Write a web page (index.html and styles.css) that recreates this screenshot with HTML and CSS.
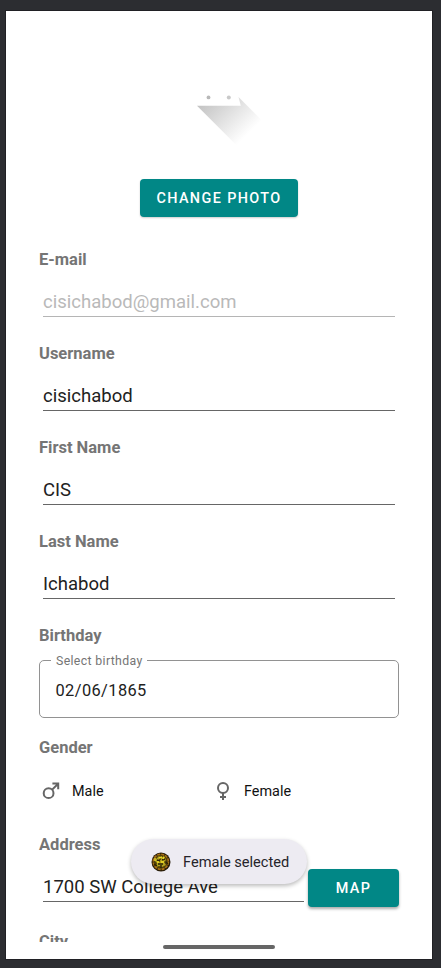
FILE: index.html
```html
<!DOCTYPE html>
<html lang="en">
<head>
<meta charset="utf-8">
<title>Profile</title>
<link rel="stylesheet" href="styles.css">
</head>
<body>
<div class="screen">
  <main class="content">
    <svg class="avatar" viewBox="0 0 80 60" width="80" height="60">
      <defs>
        <linearGradient id="shade" gradientUnits="userSpaceOnUse" x1="30" y1="8" x2="69" y2="48">
          <stop offset="0" stop-color="#c2c2c2"/>
          <stop offset="1" stop-color="#fff"/>
        </linearGradient>
      </defs>
      <path d="M17 20.7H60.8L58.5 12L84 37.5L58 61.7Z" fill="url(#shade)"/>
      <circle cx="28.5" cy="12.4" r="1.9" fill="#b8b8b8"/>
      <circle cx="48.8" cy="12.4" r="2" fill="#c9c9c9"/>
    </svg>
    <button class="btn photo">CHANGE PHOTO</button>
    <div class="field"><label>E-mail</label><div class="input disabled"><span>cisichabod@gmail.com</span></div></div>
    <div class="field"><label>Username</label><div class="input"><span>cisichabod</span></div></div>
    <div class="field"><label>First Name</label><div class="input"><span>CIS</span></div></div>
    <div class="field"><label>Last Name</label><div class="input"><span>Ichabod</span></div></div>
    <label>Birthday</label>
    <fieldset class="date"><legend><span>Select birthday</span></legend><div><span>02/06/1865</span></div></fieldset>
    <label>Gender</label>
    <div class="genders">
      <div class="gender">
        <svg viewBox="0 0 20 20" width="20" height="20"><g fill="none" stroke="#666" stroke-width="2"><circle cx="7.6" cy="12.2" r="4.9"/><path d="M11.2 8.6L16.6 3.2M11.4 2.4H17.2V8.2"/></g></svg>
        <span>Male</span>
      </div>
      <div class="gender">
        <svg viewBox="0 0 20 20" width="20" height="20"><g fill="none" stroke="#666" stroke-width="2"><circle cx="10" cy="7" r="5"/><path d="M10 12V19M7 15.9H13"/></g></svg>
        <span>Female</span>
      </div>
    </div>
    <label>Address</label>
    <div class="address"><div class="input"><span>1700 SW College Ave</span></div><button class="btn map">MAP</button></div>
    <label class="city">City</label>
  </main>
  <div class="toast">
    <svg viewBox="0 0 20 20" width="20" height="20">
      <circle cx="10" cy="10" r="9.5" fill="#251b08"/>
      <circle cx="9.8" cy="9.8" r="7.6" fill="#50400a" stroke="#a97016" stroke-width="1.6" stroke-dasharray="3 1"/>
      <path d="M5 7L8 4L10 6L13 4L15 8L13 10L15 13L11 15L8 14L5 15L6 11L4 9Z" fill="#b3a31d"/>
      <path d="M6 8L9 9M11 8L14 7M7 12H12M9 5V8M10 13V16M3 12L6 14M15 10L17 12" stroke="#2d2306" stroke-width="1.4"/>
      <path d="M8 6L11 5M10 10H13M6 10H8M4 6V9M12 7L13 5" stroke="#f0dc28" stroke-width="1.4"/>
    </svg>
    <span>Female selected</span>
  </div>
  <div class="home"></div>
</div>
</body>
</html>
```
FILE: styles.css
```css
* { box-sizing: border-box; }
html, body { margin: 0; height: 100%; }
body {
  padding: 11px 9px 9px 6px;
  background: #2c2d31;
  font-family: Roboto, sans-serif;
  overflow: hidden;
}
.screen {
  position: relative;
  height: 948px;
  background: #fff;
  box-shadow: 0 0 0 1px #202024;
}
.content {
  display: flex;
  flex-direction: column;
  height: 931px;
  padding: 74px 33px 0;
  overflow: hidden;
}
.content > * { flex-shrink: 0; }
.avatar { margin-left: 141px; overflow: visible; }
label {
  display: block;
  height: 20px;
  font-size: 16.5px;
  line-height: 22px;
  font-weight: 700;
  color: #757575;
}
.btn {
  height: 38px;
  padding: 0;
  border: 0;
  border-radius: 4px;
  background: #018786;
  color: #fff;
  font: 500 14.4px/38px Roboto, sans-serif;
  letter-spacing: 1.4px;
  text-indent: 0;
  padding-top: 1px;
  box-shadow: 0 1px 2px #0003;
}
.photo { width: 158px; margin: 34px 0 32px 101px; }
.field { height: 94px; }
.input {
  height: 48px;
  margin: 0 4px;
  padding-top: 21px;
  border-bottom: 1px solid #666;
  font-size: 18.55px;
  line-height: 25px;
  color: #212121;
}
.disabled { border-color: #b5b5b5; color: #b9b9b9; }
.date {
  height: 65px;
  margin: 8px 0 19px;
  padding: 0 16px;
  border: 1px solid #929292;
  border-radius: 5px;
  color: #212121;
  font-size: 16.4px;
  letter-spacing: .4px;
}
.date legend {
  height: 14px;
  margin-left: -5px;
  padding: 0 4px 0 5px;
  font-size: 12.3px;
  line-height: 17px;
  letter-spacing: .35px;
  color: #757575;
}
.date div { line-height: 20px; padding-top: 14px; margin-left: -.5px; }
.genders {
  display: grid;
  grid-template-columns: 172px 1fr;
  height: 77px;
  padding: 24px 0 0 2px;
}
.gender {
  display: flex;
  align-items: center;
  height: 20px;
  font-size: 14.4px;
  gap: 11px;
  color: #111;
}
.address { display: flex; height: 77px; gap: 4px; }
.address .input { width: 261px; margin-right: 0; }
.map { width: 91px; margin-top: 15px; box-shadow: 0 2px 3px #0005; }
.toast {
  position: absolute;
  left: 125px;
  top: 828px;
  display: flex;
  align-items: center;
  gap: 12px;
  width: 176px;
  height: 45px;
  padding-left: 20px;
  border-radius: 23px;
  background: #edebf2;
  box-shadow: 0 2px 4px #0004;
  color: #25242a;
  font-size: 14.6px;
}
.toast span { padding-top: 1px; }
.home {
  position: absolute;
  left: 157px;
  top: 934px;
  width: 112px;
  height: 4px;
  border-radius: 2px;
  background: #666;
}
```
